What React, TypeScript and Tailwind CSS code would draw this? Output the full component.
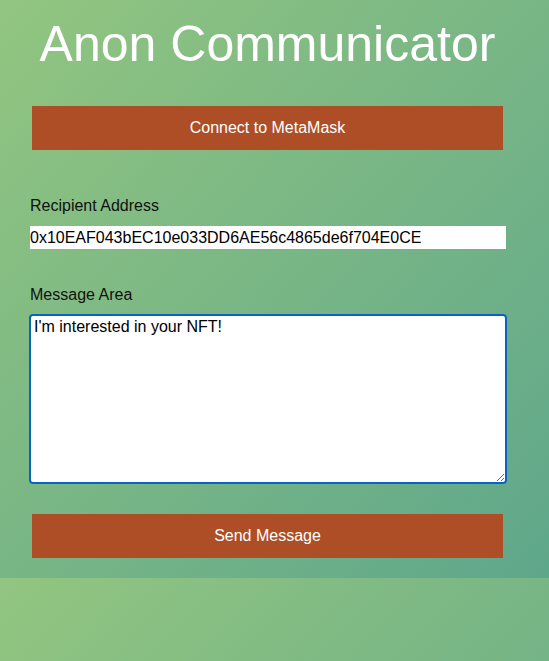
import { useState } from "react";

const BTN =
  "mx-[32px] h-[44px] bg-[#ad4e26] text-white text-[16px] leading-[18px] flex items-center justify-center";

export default function App() {
  const [address, setAddress] = useState("0x10EAF043bEC10e033DD6AE56c4865de6f704E0CE");
  const [message, setMessage] = useState("I'm interested in your NFT!");

  return (
    <div className="h-screen w-full bg-[linear-gradient(to_bottom_right,#92c580,#5fa78b)] bg-[length:100%_578px] bg-repeat font-['Liberation_Sans',Arial,sans-serif]">
      <div className="h-[578px] w-[535px] flex flex-col">
        <h1 className="mt-[19px] text-center text-white text-[50px] leading-none">Anon Communicator</h1>

        <button type="button" className={`${BTN} mt-[37px]`}>
          Connect to MetaMask
        </button>

        <label className="mt-[47px] ml-[30px] text-[16px] leading-[18px] text-[#111]">Recipient Address</label>
        <input
          value={address}
          onChange={(e) => setAddress(e.target.value)}
          className="mt-[11px] ml-[30px] mr-[29px] h-[23px] bg-white px-0 text-[16px] text-black outline-none"
        />

        <label className="mt-[37px] ml-[30px] text-[16px] leading-[18px] text-[#111]">Message Area</label>
        <textarea
          value={message}
          onChange={(e) => setMessage(e.target.value)}
          className="mt-[10px] ml-[29px] mr-[28px] h-[170px] rounded-[4px] border-2 border-[#0a62c4] bg-white px-[3px] py-[2px] text-[16px] leading-[18px] text-black outline-none"
        />

        <button type="button" className={`${BTN} mt-[30px]`}>
          Send Message
        </button>
      </div>
    </div>
  );
}
